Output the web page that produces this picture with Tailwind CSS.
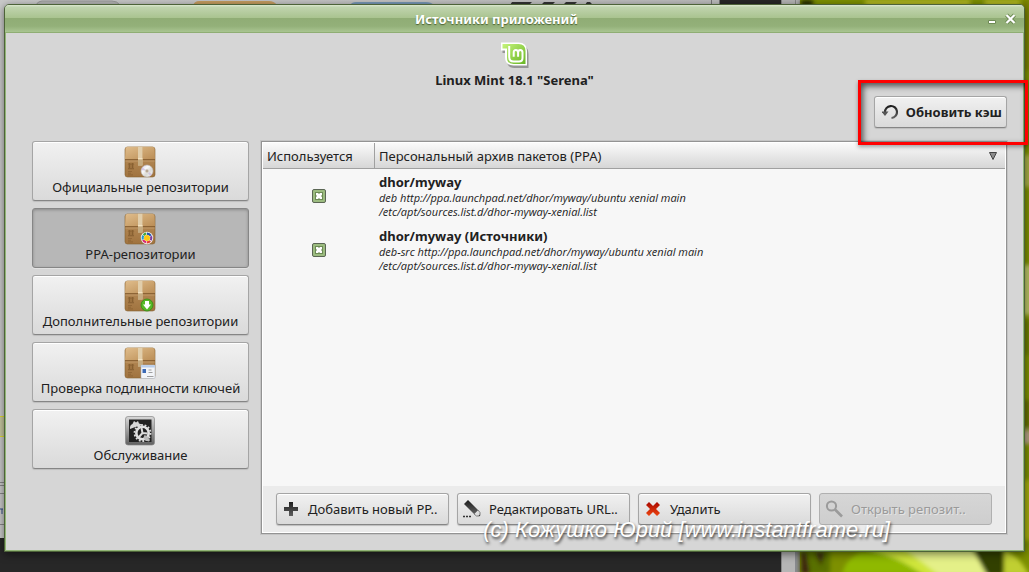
<!DOCTYPE html>
<html lang="ru">
<head>
<meta charset="utf-8">
<meta name="viewport" content="width=device-width, initial-scale=1">
<title>Источники приложений</title>
<script src="https://cdn.jsdelivr.net/npm/@tailwindcss/browser@4"></script>
</head>
<body class="relative flex min-h-screen flex-col overflow-hidden bg-[#272727] font-['Noto_Sans','Open_Sans',sans-serif] text-[13px] leading-4 text-[#212121]">

<!-- Shared gradients and the parcel symbol -->
<svg class="absolute size-0" aria-hidden="true">
  <defs>
    <linearGradient id="flap" x1="0" y1="0" x2="1" y2="1"><stop offset="0" stop-color="#e0bd8c"/><stop offset=".5" stop-color="#cda570"/><stop offset="1" stop-color="#ba8d56"/></linearGradient>
    <linearGradient id="front" x1="0" y1="0" x2="0" y2="1"><stop offset="0" stop-color="#bd935f"/><stop offset="1" stop-color="#a0733f"/></linearGradient>
    <linearGradient id="steel" x1="0" y1="0" x2="0" y2="1"><stop offset="0" stop-color="#d8d8d8"/><stop offset="1" stop-color="#606060"/></linearGradient>
    <linearGradient id="ink" x1="0" y1="0" x2="0" y2="1"><stop offset="0" stop-color="#1d1d1d"/><stop offset="1" stop-color="#606060"/></linearGradient>
    <linearGradient id="red" x1="0" y1="0" x2="0" y2="1"><stop offset="0" stop-color="#a80800"/><stop offset="1" stop-color="#ee4510"/></linearGradient>
    <linearGradient id="mint" x1="0" y1="0" x2="1" y2="1"><stop offset="0" stop-color="#c6f47c"/><stop offset="1" stop-color="#69b625"/></linearGradient>
    <linearGradient id="disc" x1="0" y1="0" x2="1" y2="1"><stop offset="0" stop-color="#d4cbe6"/><stop offset=".35" stop-color="#fafafa"/><stop offset=".6" stop-color="#d9d9d4"/><stop offset="1" stop-color="#fff"/></linearGradient>
    <symbol id="parcel" viewBox="0 0 32 32">
      <rect x="1" y="1" width="30" height="30" rx="2.5" fill="url(#front)" stroke="#85612f" stroke-width=".6"/>
      <path d="M3.500.700h25Q30 .7 30.300 2.500L31 13.500H1L1.700 2.500Q2 .7 3.500.700Z" fill="url(#flap)"/>
      <path d="M1 13.700h30" stroke="#7c5528" stroke-width=".9"/>
      <path d="M1.300 15h29.400" stroke="#cfaa78" stroke-width=".6"/>
      <path d="M14 .7h4.500V19.500H14Z" fill="#dcc7a2"/>
      <path d="M14 13h4.500v6.500H14Z" fill="#c5ac82"/>
      <path d="M14 12.700h4.500" stroke="#f5e6c4" stroke-width="1.200"/>
      <path d="M15 1v12M17 1v12" stroke="#f0e2c4" stroke-width=".5"/>
      <path d="M4 17h6v6H4Z" fill="#8f6536" opacity=".45"/>
      <path d="M5.500 18v4M8.500 18v4M4 22.800h6M4.300 18.500l1.200-1.300 1.200 1.300M7.300 18.500l1.200-1.300 1.200 1.300" fill="none" stroke="#7e572b" stroke-width=".7"/>
      <path d="M4 25.500h4M4 27.200h3M4 28.900h5" fill="none" stroke="#7e572b" stroke-width=".7" opacity=".7"/>
    </symbol>
  </defs>
</svg>

<!-- Desktop behind the window -->
<svg class="absolute inset-0 size-full" viewBox="0 0 1029 572" preserveAspectRatio="none" aria-hidden="true">
  <defs>
    <filter id="soft" x="-20%" y="-20%" width="140%" height="140%"><feGaussianBlur stdDeviation="2"/></filter>
    <linearGradient id="pane" x1="0" x2="1"><stop offset="0" stop-color="#cacaca"/><stop offset="1" stop-color="#bcbcbc"/></linearGradient>
  </defs>
  <rect width="1029" height="572" fill="#272727"/>
  <rect width="720" height="538" fill="url(#pane)"/>
  <path d="M36 5q2-4 6-4h70q5 0 8 4" fill="#b5b5b5" stroke="#999"/>
  <path d="M193 5q2-4 6-4h70q5 0 8 4Z" fill="#c59c60"/>
  <path d="M350 5q2-3 6-3h70q5 0 8 3Z" fill="#7797b6"/>
  <path d="M510 5l2-3h20l-3 3ZM541 5l3-3h11l-3 3ZM563 5l3-3h11l-3 3ZM585 5l2-3h3l3 3Z" fill="#333"/>
  <path d="M711.500 0v5M719.500 0v5" stroke="#777"/>
  <rect x="781" width="19" height="572" fill="#b5b5b5"/>
  <path d="M781.500 0v572M795.500 0v572" stroke="#888"/>
  <rect x="795" y="552" width="6" height="20" fill="#8a8a90"/>
  <rect x="800" width="229" height="572" fill="#7d9000"/>
  <g filter="url(#soft)">
    <path d="M801 0h12v6h-12Z" fill="#202600"/>
    <path d="M865 0h155v6H865Z" fill="#b8bd28"/>
    <path d="M970 0h15v6h-15Z" fill="#7b9000"/>
    <path d="M1022 0h9v70h-9Z" fill="#788006"/>
    <path d="M1022 155h9v32h-9Z" fill="#aab04a"/>
    <path d="M1022 265h9v50h-9Z" fill="#bdc66c"/>
    <path d="M1022 320h9v35h-9Z" fill="#6c7c00"/>
    <path d="M1022 400h9v28h-9Z" fill="#667000"/>
    <path d="M1022 430h9v14h-9Z" fill="#b7a28a"/>
    <path d="M1022 480h9v60h-9Z" fill="#a6ad10"/>
    <path d="M800 550h30v24h-30Z" fill="#587000"/>
    <path d="M801 552l5 0 4 22h-9Z" fill="#3c2110"/>
    <path d="M815 552l10 0-4 14Z" fill="#3b2611"/>
    <path d="M842 574q3-14 18-22h38l42 22Z" fill="#8fb900"/>
    <path d="M862 548h55q32 10 45 28h-38q-25-20-62-28Z" fill="#cfe53b"/>
    <path d="M900 545h70l18 31h-48Z" fill="#e4f088"/>
    <path d="M973 549h34l-4 26h-16Z" fill="#333f04"/>
    <path d="M1004 550q15 5 25 25h-25Z" fill="#c0cf30"/>
  </g>
  <path d="M0 416.500h5M0 436.500h5" stroke="#e2dc2e"/>
  <path d="M0 417h5v19H0Z" fill="#c8c7a0"/>
  <path d="M0 482.500h5M0 485.500h5M0 493.500h5M0 524.500h5" stroke="#888"/>
  <path d="M0 509h3M2 509v5" stroke="#304a80"/>
</svg>

<main class="relative mx-1 mt-1 mb-5 flex flex-1 flex-col rounded-t-[5px] border border-[#4d6339] bg-[#d6d6d6] shadow-[0_2px_8px_rgba(0,0,0,0.5),inset_0_0_0_1px_#91b575]">
  <header class="relative flex h-7 items-center justify-center rounded-t border-b border-[#8fae74] bg-[linear-gradient(#dce8d0_0,#c0d4ae_8%,#a9c38f_48%,#90ad75_50%,#93b079_78%,#a9c591_100%)] pr-9">
    <h1 class="text-[13px] font-bold text-white [text-shadow:0_1px_1px_#4c6234]">Источники приложений</h1>
    <div class="absolute inset-y-0 right-[5px] flex items-center gap-[3px]">
      <button class="grid h-4 w-4 place-items-center" aria-label="Свернуть"><svg class="h-4 w-4" viewBox="0 0 16 16"><path d="M4.500 9.500h7v3h-7Z" fill="#fff" stroke="#6e8b54"/></svg></button>
      <button class="grid h-4 w-4 place-items-center" aria-label="Закрыть"><svg class="h-4 w-4" viewBox="0 0 16 16"><path d="M3.500 4l8 8m0-8l-8 8" stroke="#6e8b54" stroke-width="4"/><path d="M3.500 4l8 8m0-8l-8 8" stroke="#fff" stroke-width="2.200"/></svg></button>
    </div>
  </header>

  <section class="flex flex-col items-center pt-2">
    <svg class="h-7 w-8" viewBox="0 0 32 28" aria-hidden="true">
      <path d="M2.500 2.500h17q9 0 9 9v14H14.500q-7.500 0-7.500-7.500V10.500H2.500Z" fill="#555" opacity=".5" transform="translate(1 1.500)"/>
      <path d="M2 1.500h17.500q8.500 0 8.500 8.500v14.500H14.500Q6 24.500 6 16V9.500H2Z" fill="#fff"/>
      <path d="M3.500 3h16q7 0 7 7v13H14.500Q8 23 8 16.500V7.500H3.500Z" fill="url(#mint)"/>
      <path d="M10.200 5v11q0 4.500 4.500 4.500h5.300q3.500 0 3.500-3.500v-5.500q0-2.500-2.200-2.500t-2.200 2.500v4.200m0-4.200q0-2.500-2.200-2.500t-2.200 2.500v4.200" fill="none" stroke="#fff" stroke-width="2"/>
    </svg>
    <h2 class="mt-[3px] text-[13px] font-bold">Linux Mint 18.1 "Serena"</h2>
  </section>

  <div class="mt-2 mr-[17px] flex justify-end">
    <button class="flex h-8 items-center gap-2 rounded-[3px] border border-[#a5a5a5] border-b-[#858585] bg-linear-to-b from-[#f1f1f1] to-[#dadada] pr-1 pl-[7px] font-bold shadow-[inset_0_1px_#fff,0_1px_1px_#bdbdbd]">
      <svg class="h-4 w-4" viewBox="0 0 16 16" aria-hidden="true"><path d="M3 8.500A6 6 0 1 1 9.500 14" fill="none" stroke="url(#ink)" stroke-width="2.200"/><path d="M-.5 7.500h7L3 12Z" fill="#555"/></svg>
      <span>Обновить кэш</span>
    </button>
  </div>

  <div class="mt-[13px] mr-[17px] mb-[17px] ml-[27px] flex flex-1 gap-3">
    <nav class="flex w-[217px] shrink-0 flex-col gap-[7px]" aria-label="Разделы">
      <button class="flex h-[60px] flex-col items-center rounded-[3px] border border-[#a5a5a5] border-b-[#858585] bg-linear-to-b from-[#f1f1f1] to-[#dadada] pt-1 shadow-[inset_0_1px_#fff,0_1px_1px_#bdbdbd]">
        <svg class="mr-px size-8" viewBox="0 0 32 32" aria-hidden="true"><use href="#parcel"/><circle cx="23" cy="25" r="6" fill="url(#disc)" stroke="#bcb8b8" stroke-width=".6"/><path d="M23 25l-5.500-1 1-2.500ZM23 25l5 3-2 2Z" fill="#c9b7df" opacity=".7"/><circle cx="23" cy="25" r="2" fill="#b7a894" stroke="#eee" stroke-width=".7"/></svg>
        <span class="mt-px">Официальные репозитории</span>
      </button>
      <button class="flex h-[60px] flex-col items-center rounded-[3px] border border-[#868686] bg-[#b7b7b7] pt-1 shadow-[inset_0_1px_3px_#888,0_1px_#e2e2e2]" aria-pressed="true">
        <svg class="mr-px size-8" viewBox="0 0 32 32" aria-hidden="true"><use href="#parcel"/><circle cx="23" cy="25" r="6.200" fill="#f3f3f3"/><g fill="none" stroke-width="2.200"><path d="M23 20.600a4.400 4.400 0 0 1 3.800 2.200" stroke="#2454ad"/><path d="M27 23.300a4.400 4.400 0 0 1-.3 4" stroke="#7c3d9f"/><path d="M26.200 28a4.400 4.400 0 0 1-3.500 1.400" stroke="#e53f36"/><path d="M22 29.300a4.400 4.400 0 0 1-2.900-2.200" stroke="#d82676"/><path d="M18.800 26.500a4.400 4.400 0 0 1 .5-3.800" stroke="#259bcb"/><path d="M19.600 22.200a4.400 4.400 0 0 1 2.700-1.500" stroke="#45a544"/></g><circle cx="23" cy="25" r="3" fill="#fdc913"/></svg>
        <span class="mt-px">PPA-репозитории</span>
      </button>
      <button class="flex h-[60px] flex-col items-center rounded-[3px] border border-[#a5a5a5] border-b-[#858585] bg-linear-to-b from-[#f1f1f1] to-[#dadada] pt-1 shadow-[inset_0_1px_#fff,0_1px_1px_#bdbdbd]">
        <svg class="mr-px size-8" viewBox="0 0 32 32" aria-hidden="true"><use href="#parcel"/><circle cx="23" cy="25" r="6" fill="#56b825" stroke="#338b13" stroke-width=".8"/><path d="M21 21h4v3.500h2L23 29.500 19 24.500h2Z" fill="#fff"/></svg>
        <span class="mt-px">Дополнительные репозитории</span>
      </button>
      <button class="flex h-[60px] flex-col items-center rounded-[3px] border border-[#a5a5a5] border-b-[#858585] bg-linear-to-b from-[#f1f1f1] to-[#dadada] pt-1 shadow-[inset_0_1px_#fff,0_1px_1px_#bdbdbd]">
        <svg class="mr-px size-8" viewBox="0 0 32 32" aria-hidden="true"><use href="#parcel"/><rect x="17" y="18" width="14" height="13.500" rx="1" fill="#f3f5f8" stroke="#a5adb8" stroke-width=".5"/><path d="M17.200 18.200h13.600v2.300H17.200Z" fill="#b8cdeb"/><path d="M18.500 22h3.500v4h-3.500Z" fill="#3c69b4"/><path d="M24.500 23h3M24.500 25.500h4M23 29.500h6.500" stroke="#888" stroke-width=".8"/></svg>
        <span class="mt-px">Проверка подлинности ключей</span>
      </button>
      <button class="flex h-[60px] flex-col items-center rounded-[3px] border border-[#a5a5a5] border-b-[#858585] bg-linear-to-b from-[#f1f1f1] to-[#dadada] pt-1 shadow-[inset_0_1px_#fff,0_1px_1px_#bdbdbd]">
        <svg class="mr-px size-8" viewBox="0 0 32 32" aria-hidden="true"><rect x="1.500" y="2.500" width="29" height="28.500" rx="2.500" fill="url(#steel)" stroke="#888" stroke-width=".7"/><rect x="5" y="5.500" width="22.500" height="22.500" fill="#222"/><path d="M6 15q-.5-4 2.500-5l1.500-3 2 1.500 2-1.500 1 2.500 3 1-2 1.500 1 2-4-1.500-3 1Z" fill="#d8d8d8"/><circle cx="18.500" cy="19" r="6.200" fill="none" stroke="#e1e1e1" stroke-width="2.600"/><circle cx="18.500" cy="19" r="8" fill="none" stroke="#ddd" stroke-width="1.800" stroke-dasharray="1.800 1.800"/><path d="M18.500 19l-3.500 4M18.500 19l5 .5M18.500 19l-1-5" stroke="#ddd" stroke-width="2"/><path d="M20.500 21l2.500 1 3 4-1 1.500-4-1-1.500-3Z" fill="#bbb"/></svg>
        <span class="mt-px">Обслуживание</span>
      </button>
    </nav>

    <section class="flex min-w-0 flex-1 flex-col border border-[#939393] bg-[#ebebeb] shadow-[inset_0_0_0_1px_#fff,0_0_0_1px_#c4c4c4]">
      <div class="m-px flex-1 bg-[#f7f7f7]">
        <table class="w-full table-fixed border-separate border-spacing-0 text-left">
          <thead>
            <tr class="h-[26px] bg-linear-to-b from-[#fafafa] to-[#d5d5d5]">
              <th class="w-28 border-r border-b border-[#a0a0a0] px-1 font-normal">Используется</th>
              <th class="border-b border-[#a0a0a0] px-1 font-normal" aria-sort="descending">
                <div class="flex items-center justify-between"><span>Персональный архив пакетов (PPA)</span><svg class="mr-1 h-2 w-2" viewBox="0 0 8 8" aria-hidden="true"><path d="M.5.500h7L4 7.500Z" fill="#8c8c8c" stroke="#444"/></svg></div>
              </th>
            </tr>
          </thead>
          <tbody>
            <tr class="h-[54px]">
              <td class="text-center"><label class="relative mx-auto grid size-3.5"><input type="checkbox" checked aria-label="dhor/myway" class="size-3.5 appearance-none rounded-[2px] border border-[#5b6654] bg-[#9cbc80]"><svg class="pointer-events-none absolute inset-0 size-3.5" viewBox="0 0 14 14" aria-hidden="true"><path d="M3 3h8v8H3Z" fill="#6d8b55"/><path d="M4 4h2l1 1 1-1h2v2L9 7l1 1v2H8L7 9l-1 1H4V8l1-1-1-1Z" fill="#fff"/></svg></label></td>
              <td class="px-1"><div class="text-[13px] leading-[18px] font-bold">dhor/myway</div><div class="font-['Open_Sans','Noto_Sans',sans-serif] text-[11px] leading-[14px] italic">deb http://ppa.launchpad.net/dhor/myway/ubuntu xenial main<br>/etc/apt/sources.list.d/dhor-myway-xenial.list</div></td>
            </tr>
            <tr class="h-[54px]">
              <td class="text-center"><label class="relative mx-auto grid size-3.5"><input type="checkbox" checked aria-label="dhor/myway (Источники)" class="size-3.5 appearance-none rounded-[2px] border border-[#5b6654] bg-[#9cbc80]"><svg class="pointer-events-none absolute inset-0 size-3.5" viewBox="0 0 14 14" aria-hidden="true"><path d="M3 3h8v8H3Z" fill="#6d8b55"/><path d="M4 4h2l1 1 1-1h2v2L9 7l1 1v2H8L7 9l-1 1H4V8l1-1-1-1Z" fill="#fff"/></svg></label></td>
              <td class="px-1"><div class="text-[13px] leading-[18px] font-bold">dhor/myway (Источники)</div><div class="font-['Open_Sans','Noto_Sans',sans-serif] text-[11px] leading-[14px] italic">deb-src http://ppa.launchpad.net/dhor/myway/ubuntu xenial main<br>/etc/apt/sources.list.d/dhor-myway-xenial.list</div></td>
            </tr>
          </tbody>
        </table>
      </div>
      <div class="grid grid-cols-4 gap-2 px-3.5 pt-1.5 pb-2">
        <button class="flex h-8 items-center gap-[9px] rounded-[3px] border border-[#a5a5a5] border-b-[#858585] bg-linear-to-b from-[#f1f1f1] to-[#dadada] pl-1.5 whitespace-nowrap shadow-[inset_0_1px_#fff,0_1px_1px_#bdbdbd]">
          <svg class="size-4" viewBox="0 0 16 16" aria-hidden="true"><path d="M6 1h4v5h5v4h-5v5H6v-5H1V6h5Z" fill="url(#ink)"/></svg><span>Добавить новый PP..</span>
        </button>
        <button class="flex h-8 items-center gap-[9px] rounded-[3px] border border-[#a5a5a5] border-b-[#858585] bg-linear-to-b from-[#f1f1f1] to-[#dadada] pl-1.5 whitespace-nowrap shadow-[inset_0_1px_#fff,0_1px_1px_#bdbdbd]">
          <svg class="h-4 w-4 overflow-visible" viewBox="0 0 16 16" aria-hidden="true"><path d="M0 3L4-1 14 9l-4 4Z" fill="url(#ink)"/><path d="M10 13l4-4 2 2.500v3l-1 .5h-2.500Z" fill="#ddd" stroke="#666" stroke-width=".8"/><path d="M14.500 15h1.500v-1.500Z" fill="#333"/><path d="M-1 15.500h2m1 0h2m1 0h2" stroke="#333" stroke-width="1.500"/></svg><span>Редактировать URL..</span>
        </button>
        <button class="flex h-8 items-center gap-[9px] rounded-[3px] border border-[#a5a5a5] border-b-[#858585] bg-linear-to-b from-[#f1f1f1] to-[#dadada] pl-1.5 whitespace-nowrap shadow-[inset_0_1px_#fff,0_1px_1px_#bdbdbd]">
          <svg class="size-4" viewBox="0 0 16 16" aria-hidden="true"><path d="M4 1l4 4 4-4 3 3-4 4 4 4-3 3-4-4-4 4-3-3 4-4-4-4Z" fill="url(#red)"/></svg><span>Удалить</span>
        </button>
        <button disabled class="flex h-8 items-center gap-[9px] rounded-[3px] border border-[#b0b0b0] bg-linear-to-b from-[#d6d6d6] to-[#cecece] pl-1.5 whitespace-nowrap text-[#9a9a9a] [text-shadow:1px_1px_#e5e5e5]">
          <svg class="size-4 overflow-visible" viewBox="0 0 16 16" aria-hidden="true"><circle cx="5.500" cy="5" r="4.600" fill="none" stroke="#9b9b9b" stroke-width="2"/><path d="M9 8.500l7 7" stroke="#9b9b9b" stroke-width="2.600"/></svg><span>Открыть репозит..</span>
        </button>
      </div>
    </section>
  </div>
</main>

<div class="pointer-events-none absolute top-20 right-px h-[65px] w-[170px] border-[3px] border-[#ff0000] shadow-[0_2px_4px_rgba(0,0,0,0.35),inset_2px_3px_6px_rgba(0,0,0,0.65)]"></div>
<p class="pointer-events-none absolute right-[139px] bottom-[30px] font-['Liberation_Sans',Arial,sans-serif] text-[22px] leading-6 whitespace-nowrap text-white italic [text-shadow:1px_2px_3px_rgba(0,0,0,0.75)]">(c) Кожушко Юрий [www.instantframe.ru]</p>
</body>
</html>
